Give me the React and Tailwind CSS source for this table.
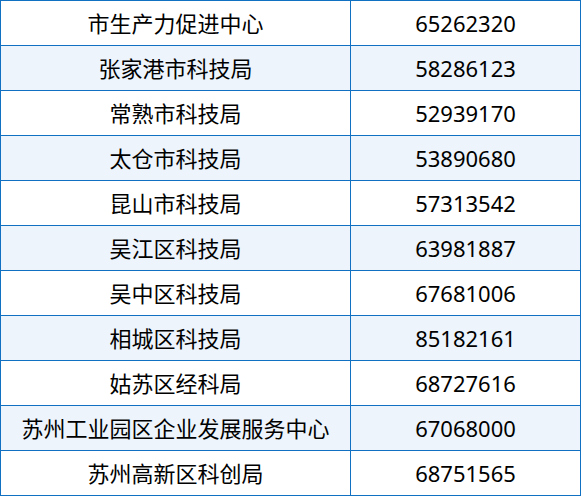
import React from "react";

const rows = [
  ["市生产力促进中心", "65262320"],
  ["张家港市科技局", "58286123"],
  ["常熟市科技局", "52939170"],
  ["太仓市科技局", "53890680"],
  ["昆山市科技局", "57313542"],
  ["吴江区科技局", "63981887"],
  ["吴中区科技局", "67681006"],
  ["相城区科技局", "85182161"],
  ["姑苏区经科局", "68727616"],
  ["苏州工业园区企业发展服务中心", "67068000"],
  ["苏州高新区科创局", "68751565"],
];

export default function App() {
  return (
    <div
      className="w-[581px] bg-white text-black text-[22px] leading-none border-l border-r border-t border-[#1170c1]"
      style={{ fontFamily: '"Noto Sans", "Noto Sans CJK SC", sans-serif' }}
    >
      {rows.map(([name, phone], i) => (
        <div
          key={name}
          className={
            i % 2 === 1
              ? "flex h-[45px] border-b border-[#1170c1] bg-[#edf4fb]"
              : "flex h-[45px] border-b border-[#1170c1] bg-white"
          }
        >
          <div className="w-[350px] shrink-0 flex items-center justify-center border-r border-[#1170c1] whitespace-nowrap">
            {name}
          </div>
          <div className="flex-1 flex items-center justify-center whitespace-nowrap">
            {phone}
          </div>
        </div>
      ))}
    </div>
  );
}
